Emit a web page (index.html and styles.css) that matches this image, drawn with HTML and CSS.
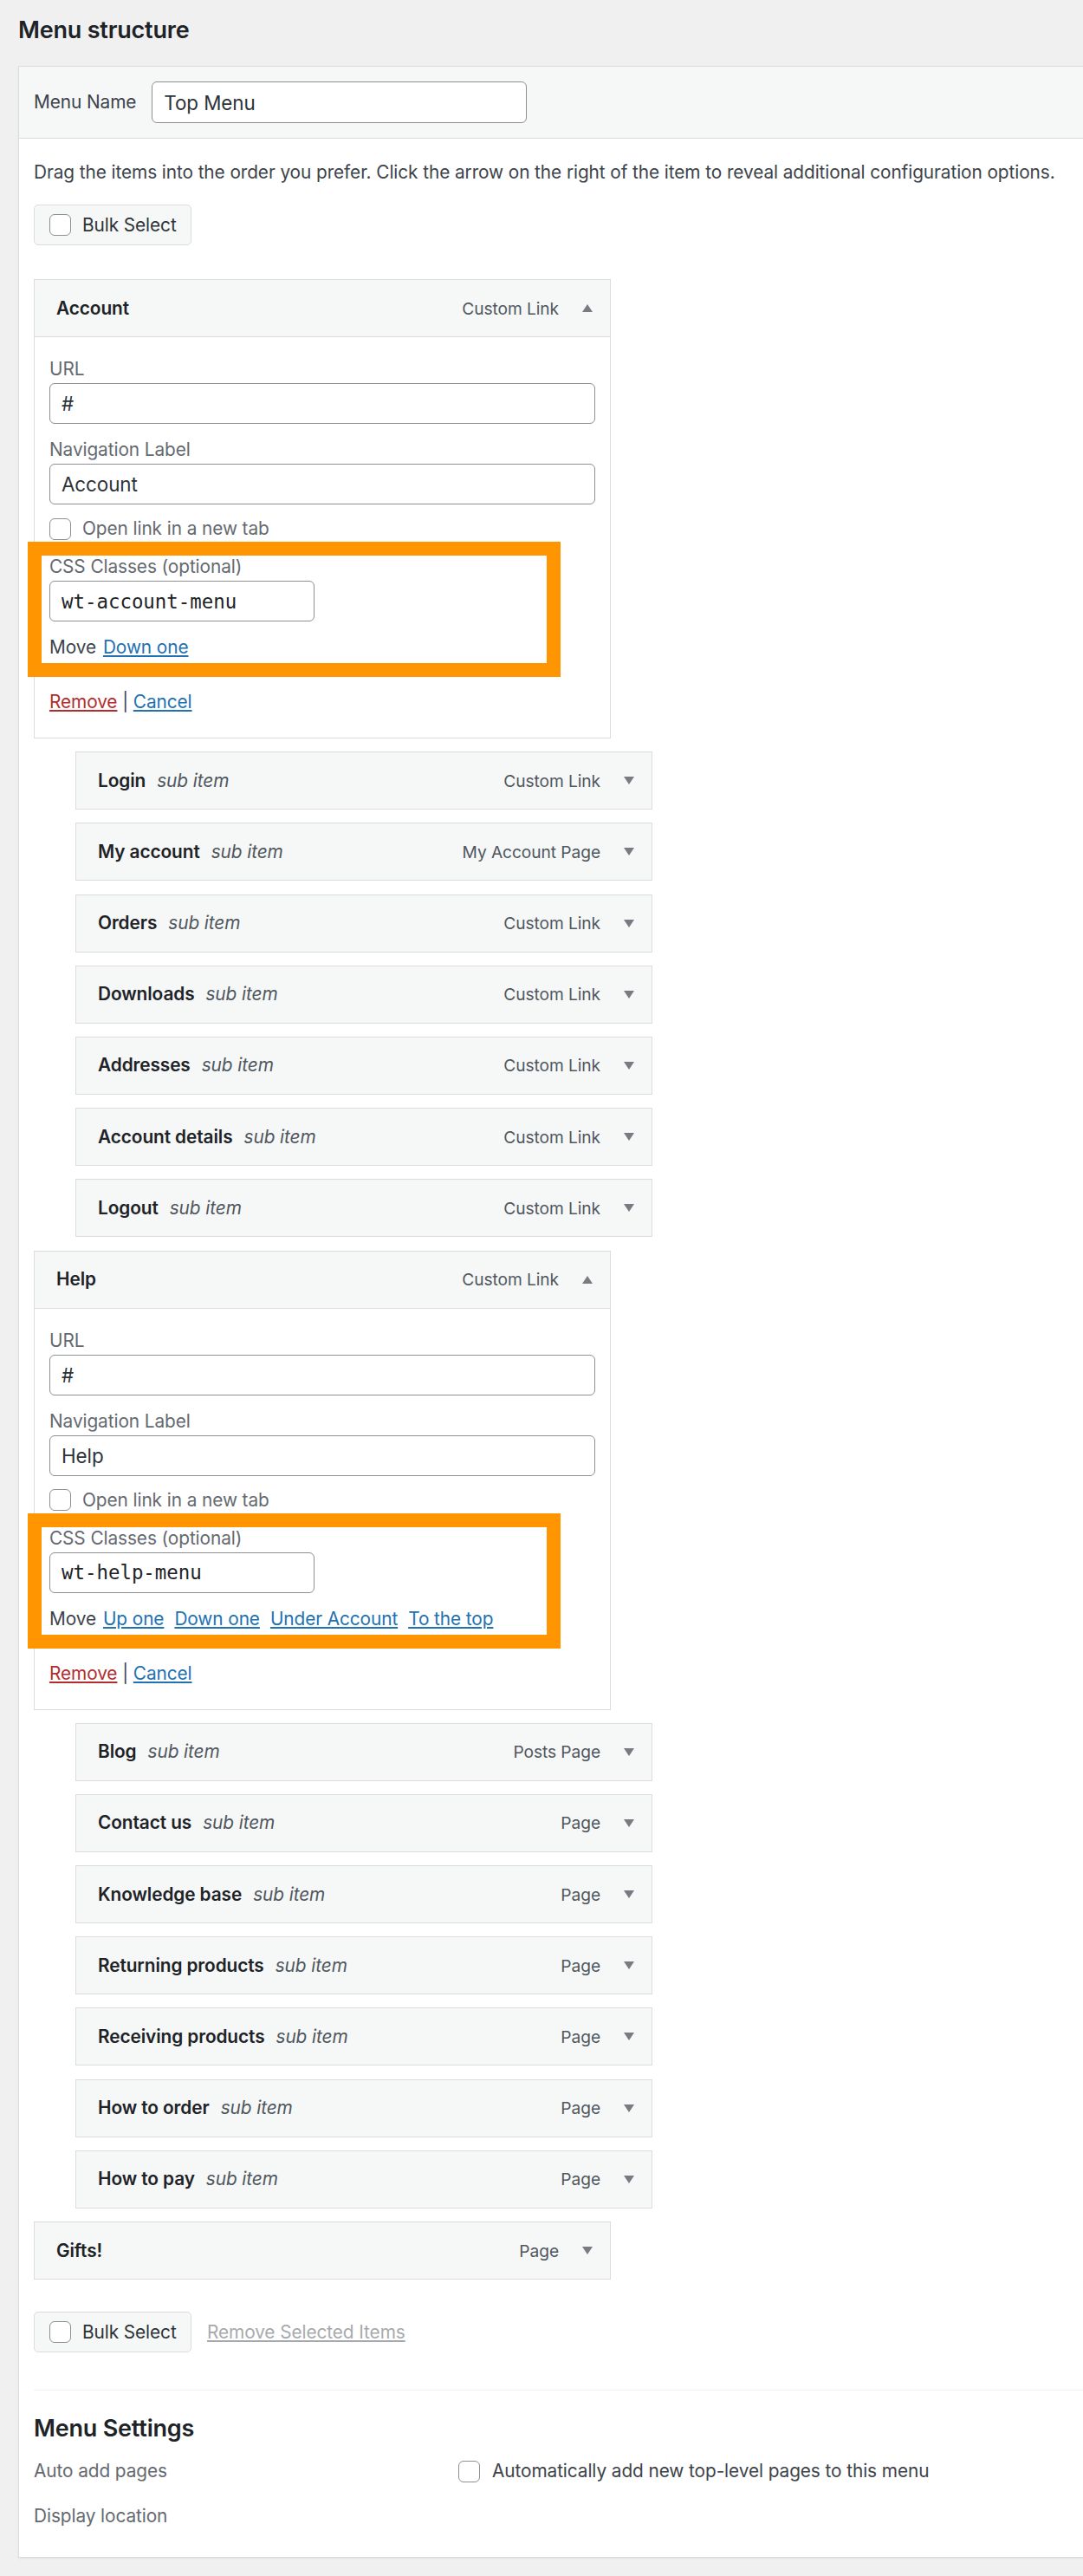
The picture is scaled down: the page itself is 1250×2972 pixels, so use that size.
FILE: index.html
```html
<!DOCTYPE html>
<html lang="en">
<head>
    <meta charset="UTF-8">
    <meta name="viewport" content="width=device-width, initial-scale=1.0">
    <title>Menus</title>
    <link rel="stylesheet" href="styles.css">
</head>
<body>
    <h2 class="section-title">Menu structure</h2>

    <div class="menu-management">
        <div class="menu-name-bar">
            <label class="menu-name-label" for="menu-name">Menu Name</label>
            <input class="text-input menu-name-input" id="menu-name" type="text" value="Top Menu">
        </div>

        <div class="menu-body">
            <p class="drag-instructions">Drag the items into the order you prefer. Click the arrow on the right of the item to reveal additional configuration options.</p>

            <div class="bulk-row">
                <label class="bulk-btn"><input class="check" type="checkbox"> Bulk Select</label>
            </div>

            <ul class="menu-list">
                <li class="menu-item open">
                    <div class="item-bar">
                        <span class="item-title">Account</span>
                        <span class="item-type">Custom Link</span>
                        <span class="item-arrow up"></span>
                    </div>
                    <div class="item-settings">
                        <div class="field">
                            <label class="field-label">URL</label>
                            <input class="text-input wide" type="text" value="#">
                        </div>
                        <div class="field">
                            <label class="field-label">Navigation Label</label>
                            <input class="text-input wide" type="text" value="Account">
                        </div>
                        <label class="check-row"><input class="check" type="checkbox"> Open link in a new tab</label>
                        <div class="highlight">
                            <div class="field">
                                <label class="field-label">CSS Classes (optional)</label>
                                <input class="text-input code" type="text" value="wt-account-menu">
                            </div>
                            <div class="move-row">
                                <span class="move-label">Move</span>
                                <a href="#">Down one</a>
                            </div>
                        </div>
                        <div class="item-actions"><a class="remove" href="#">Remove</a> | <a href="#">Cancel</a></div>
                    </div>
                </li>
                <li class="menu-item sub"><div class="item-bar"><span class="item-title">Login</span><span class="sub-label">sub item</span><span class="item-type">Custom Link</span><span class="item-arrow"></span></div></li>
                <li class="menu-item sub"><div class="item-bar"><span class="item-title">My account</span><span class="sub-label">sub item</span><span class="item-type">My Account Page</span><span class="item-arrow"></span></div></li>
                <li class="menu-item sub"><div class="item-bar"><span class="item-title">Orders</span><span class="sub-label">sub item</span><span class="item-type">Custom Link</span><span class="item-arrow"></span></div></li>
                <li class="menu-item sub"><div class="item-bar"><span class="item-title">Downloads</span><span class="sub-label">sub item</span><span class="item-type">Custom Link</span><span class="item-arrow"></span></div></li>
                <li class="menu-item sub"><div class="item-bar"><span class="item-title">Addresses</span><span class="sub-label">sub item</span><span class="item-type">Custom Link</span><span class="item-arrow"></span></div></li>
                <li class="menu-item sub"><div class="item-bar"><span class="item-title">Account details</span><span class="sub-label">sub item</span><span class="item-type">Custom Link</span><span class="item-arrow"></span></div></li>
                <li class="menu-item sub"><div class="item-bar"><span class="item-title">Logout</span><span class="sub-label">sub item</span><span class="item-type">Custom Link</span><span class="item-arrow"></span></div></li>

                <li class="menu-item open">
                    <div class="item-bar">
                        <span class="item-title">Help</span>
                        <span class="item-type">Custom Link</span>
                        <span class="item-arrow up"></span>
                    </div>
                    <div class="item-settings">
                        <div class="field">
                            <label class="field-label">URL</label>
                            <input class="text-input wide" type="text" value="#">
                        </div>
                        <div class="field">
                            <label class="field-label">Navigation Label</label>
                            <input class="text-input wide" type="text" value="Help">
                        </div>
                        <label class="check-row"><input class="check" type="checkbox"> Open link in a new tab</label>
                        <div class="highlight">
                            <div class="field">
                                <label class="field-label">CSS Classes (optional)</label>
                                <input class="text-input code" type="text" value="wt-help-menu">
                            </div>
                            <div class="move-row">
                                <span class="move-label">Move</span>
                                <a href="#">Up one</a>
                                <a href="#">Down one</a>
                                <a href="#">Under Account</a>
                                <a href="#">To the top</a>
                            </div>
                        </div>
                        <div class="item-actions"><a class="remove" href="#">Remove</a> | <a href="#">Cancel</a></div>
                    </div>
                </li>
                <li class="menu-item sub"><div class="item-bar"><span class="item-title">Blog</span><span class="sub-label">sub item</span><span class="item-type">Posts Page</span><span class="item-arrow"></span></div></li>
                <li class="menu-item sub"><div class="item-bar"><span class="item-title">Contact us</span><span class="sub-label">sub item</span><span class="item-type">Page</span><span class="item-arrow"></span></div></li>
                <li class="menu-item sub"><div class="item-bar"><span class="item-title">Knowledge base</span><span class="sub-label">sub item</span><span class="item-type">Page</span><span class="item-arrow"></span></div></li>
                <li class="menu-item sub"><div class="item-bar"><span class="item-title">Returning products</span><span class="sub-label">sub item</span><span class="item-type">Page</span><span class="item-arrow"></span></div></li>
                <li class="menu-item sub"><div class="item-bar"><span class="item-title">Receiving products</span><span class="sub-label">sub item</span><span class="item-type">Page</span><span class="item-arrow"></span></div></li>
                <li class="menu-item sub"><div class="item-bar"><span class="item-title">How to order</span><span class="sub-label">sub item</span><span class="item-type">Page</span><span class="item-arrow"></span></div></li>
                <li class="menu-item sub"><div class="item-bar"><span class="item-title">How to pay</span><span class="sub-label">sub item</span><span class="item-type">Page</span><span class="item-arrow"></span></div></li>

                <li class="menu-item"><div class="item-bar"><span class="item-title">Gifts!</span><span class="item-type">Page</span><span class="item-arrow"></span></div></li>
            </ul>

            <div class="bulk-row bottom">
                <label class="bulk-btn"><input class="check" type="checkbox"> Bulk Select</label>
                <a class="remove-selected" href="#">Remove Selected Items</a>
            </div>

            <div class="menu-settings">
                <h3 class="settings-title">Menu Settings</h3>
                <div class="setting-row">
                    <span class="setting-label">Auto add pages</span>
                    <label class="setting-check"><input class="check" type="checkbox"> Automatically add new top-level pages to this menu</label>
                </div>
                <div class="setting-row">
                    <span class="setting-label">Display location</span>
                </div>
            </div>
        </div>
    </div>
</body>
</html>
```

FILE: styles.css
```css
:root {
    --page-bg: #f0f0f1;
    --bar-bg: #f6f7f7;
    --border: #dcdcde;
    --input-border: #8c8f94;
    --heading: #1d2327;
    --text: #3c434a;
    --muted: #646970;
    --link: #2271b1;
    --danger: #b32d2e;
    --highlight: #ff9500;
}

html, body {
    overflow-x: hidden;
}

body {
    margin: 0;
    padding: 17px 0 21px 21px;
    background: var(--page-bg);
    font-family: 'Inter', 'Noto Sans', sans-serif;
    font-size: 20.8px;
    line-height: 30px;
    letter-spacing: -0.08px;
    color: var(--text);
}

.section-title {
    margin: 0 0 23px;
    font-size: 27px;
    line-height: 36px;
    font-weight: 600;
    letter-spacing: -0.2px;
    color: var(--heading);
}

.menu-management {
    margin-right: -40px;
    background: white;
    border: 1px solid var(--border);
    box-shadow: 0 1px 2px rgba(0, 0, 0, 0.06);
}

.menu-name-bar {
    display: flex;
    align-items: center;
    gap: 18px;
    padding: 17px 17px;
    background: var(--bar-bg);
    border-bottom: 1px solid var(--border);
}

.menu-name-label {
    color: var(--text);
}

.text-input {
    box-sizing: border-box;
    height: 47px;
    margin: 0;
    padding: 0 13px;
    border: 1px solid var(--input-border);
    border-radius: 6px;
    background: white;
    font-family: inherit;
    font-size: 22.4px;
    letter-spacing: -0.08px;
    color: #2c3338;
    outline: none;
}

.menu-name-input {
    width: 433px;
    height: 48px;
}

.menu-body {
    padding: 0 17px 32px;
}

.drag-instructions {
    margin: 24px 0 0;
}

.bulk-row {
    display: flex;
    align-items: center;
    gap: 18px;
    margin-top: 22px;
}

.bulk-row.bottom {
    margin-top: 37px;
}

.bulk-btn {
    display: flex;
    align-items: center;
    gap: 13px;
    box-sizing: border-box;
    width: 182px;
    height: 47px;
    padding: 0 0 0 17px;
    background: var(--bar-bg);
    border: 1px solid var(--border);
    border-radius: 5px;
    color: #2c3338;
}

.check {
    appearance: none;
    box-sizing: border-box;
    width: 25px;
    height: 25px;
    margin: 0;
    flex: none;
    border: 1px solid var(--input-border);
    border-radius: 6px;
    background: white;
}

.remove-selected {
    color: #a7aaad;
}

.menu-list {
    list-style: none;
    margin: 39px 0 0;
    padding: 0;
}

.menu-item {
    width: 666px;
    margin-bottom: 15.2px;
}

.menu-item.sub {
    margin-left: 48px;
}

.item-bar {
    display: flex;
    align-items: center;
    box-sizing: border-box;
    height: 67px;
    padding: 0 20px 0 25px;
    background: var(--bar-bg);
    border: 1px solid var(--border);
}

.item-title {
    font-weight: 600;
    color: var(--heading);
}

.sub-label {
    margin-left: 13px;
    font-style: italic;
    color: #50575e;
}

.item-type {
    margin-left: auto;
    font-size: 19.2px;
    color: #50575e;
}

.item-arrow {
    width: 0;
    height: 0;
    margin-left: 27px;
    border-left: 6.5px solid transparent;
    border-right: 6.5px solid transparent;
    border-top: 9px solid #787c82;
}

.item-arrow.up {
    border-top: none;
    border-bottom: 9px solid #787c82;
}

.item-settings {
    padding: 22px 17px 26px;
    border: 1px solid var(--border);
    border-top: none;
}

.field-label {
    display: block;
    margin-bottom: 1px;
    color: var(--muted);
}

.text-input.wide {
    display: block;
    width: 100%;
}

.field + .field {
    margin-top: 15px;
}

.check-row {
    display: flex;
    align-items: center;
    gap: 13px;
    margin-top: 13px;
    color: var(--muted);
}

.highlight {
    position: relative;
    margin-top: 14px;
    padding-bottom: 3px;
}

/* annotation frame drawn over the settings */
.highlight::after {
    content: "";
    position: absolute;
    top: -14px;
    bottom: -16px;
    left: -25px;
    right: 40px;
    border: 16px solid var(--highlight);
    pointer-events: none;
}

.text-input.code {
    display: block;
    width: 306px;
    font-family: 'DejaVu Sans Mono', monospace;
    font-size: 22.4px;
    letter-spacing: 0;
    color: var(--heading);
}

.move-row {
    display: flex;
    gap: 12px;
    margin-top: 15px;
}

.move-label {
    margin-right: -4px;
}

a {
    color: var(--link);
    text-decoration: underline;
}

.item-actions {
    margin-top: 30px;
}

.item-actions .remove {
    color: var(--danger);
}

.menu-settings {
    margin-top: 43px;
    border-top: 1px solid var(--page-bg);
}

.settings-title {
    margin: 26px 0 0;
    font-size: 27px;
    line-height: 36px;
    font-weight: 600;
    letter-spacing: -0.2px;
    color: var(--heading);
}

.setting-row {
    display: flex;
    align-items: center;
    margin-top: 16px;
    color: var(--muted);
}

.setting-row + .setting-row {
    margin-top: 22px;
}

.setting-label {
    width: 490px;
}

.setting-check {
    display: flex;
    align-items: center;
    gap: 14px;
    color: var(--text);
}
```
